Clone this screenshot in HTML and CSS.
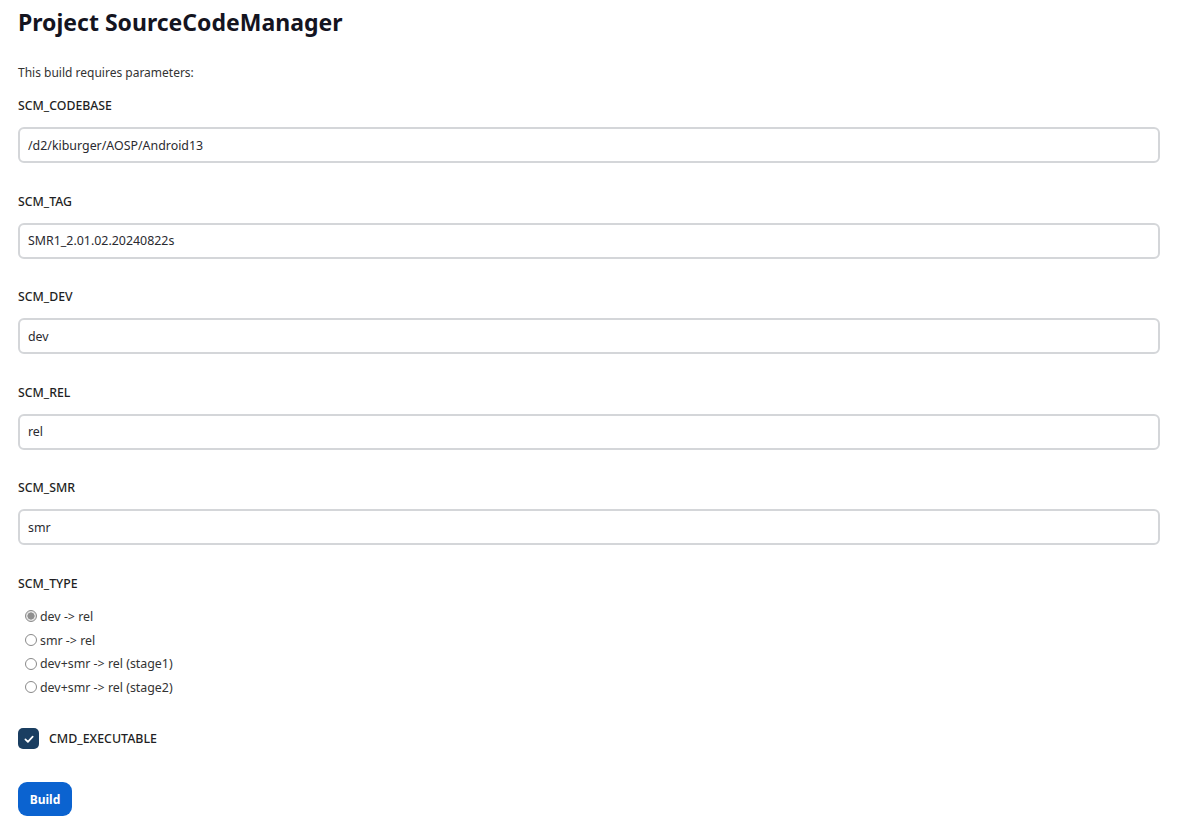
FILE: index.html
```html
<!DOCTYPE html>
<html lang="en">
<head>
<meta charset="utf-8">
<title>Project SourceCodeManager</title>
<link rel="stylesheet" href="styles.css">
</head>
<body>
<main class="page">
  <h1 class="title">Project SourceCodeManager</h1>
  <p class="intro">This build requires parameters:</p>
  <form class="params">
    <div class="field">
      <label class="field-label">SCM_CODEBASE</label>
      <input class="text-input" type="text" value="/d2/kiburger/AOSP/Android13">
    </div>
    <div class="field">
      <label class="field-label">SCM_TAG</label>
      <input class="text-input" type="text" value="SMR1_2.01.02.20240822s">
    </div>
    <div class="field">
      <label class="field-label">SCM_DEV</label>
      <input class="text-input" type="text" value="dev">
    </div>
    <div class="field">
      <label class="field-label">SCM_REL</label>
      <input class="text-input" type="text" value="rel">
    </div>
    <div class="field">
      <label class="field-label">SCM_SMR</label>
      <input class="text-input" type="text" value="smr">
    </div>
    <div class="field field-radio">
      <label class="field-label">SCM_TYPE</label>
      <div class="radios">
        <label class="radio-row"><input class="radio" type="radio" name="t" checked><span>dev -&gt; rel</span></label>
        <label class="radio-row"><input class="radio" type="radio" name="t"><span>smr -&gt; rel</span></label>
        <label class="radio-row"><input class="radio" type="radio" name="t"><span>dev+smr -&gt; rel (stage1)</span></label>
        <label class="radio-row"><input class="radio" type="radio" name="t"><span>dev+smr -&gt; rel (stage2)</span></label>
      </div>
    </div>
    <label class="check-row">
      <span class="checkbox">
        <svg viewBox="0 0 20 20" width="20" height="20"><path d="M6.4 10.4l2.5 2.5 4.8-5.2" fill="none" stroke="#fff" stroke-width="1.7" stroke-linecap="round" stroke-linejoin="round"/></svg>
      </span>
      <span class="check-label">CMD_EXECUTABLE</span>
    </label>
    <button class="build-btn" type="button">Build</button>
  </form>
</main>
</body>
</html>
```

FILE: styles.css
```css
* { box-sizing: border-box; }
html, body { margin: 0; padding: 0; background: #fff; }
body {
  font-family: "Noto Sans", "Open Sans", "Liberation Sans", sans-serif;
  color: #1f1f24;
}
.page {
  padding: 7px 26px 0 18px;
}
.title {
  margin: 0;
  font-size: 23px;
  font-weight: 700;
  line-height: 30px;
  color: #14141f;
}
.intro {
  margin: 28px 0 0;
  font-size: 12px;
  line-height: 16px;
  color: #333;
}
.params {
  display: flex;
  flex-direction: column;
}
.field {
  display: flex;
  flex-direction: column;
  margin-top: 16px;
}
.field + .field { margin-top: 29.5px; }
.field-label {
  font-size: 12.3px;
  font-weight: 500;
  line-height: 18px;
  color: #1f1f24;
}
.text-input {
  margin-top: 12px;
  height: 36px;
  width: 100%;
  border: 2px solid #d4d6d9;
  border-radius: 6px;
  padding: 0 8px;
  font-family: inherit;
  font-size: 12.4px;
  color: #2a2a30;
  background: #fff;
  outline: none;
}
.radios {
  display: flex;
  flex-direction: column;
  margin-top: 12px;
  padding-left: 7px;
}
.radio-row {
  display: flex;
  align-items: center;
  height: 23.7px;
  font-size: 12.4px;
  color: #333;
}
.radio {
  appearance: none;
  -webkit-appearance: none;
  width: 12px;
  height: 12px;
  margin: 0 3px 0 0;
  border: 1px solid #8a8a8a;
  border-radius: 50%;
  background: #fff;
}
.radio:checked {
  border-color: #8a8a8a;
  background: radial-gradient(circle, #8f8f8f 0 3.3px, #e2e2e2 3.8px);
}
.check-row {
  display: flex;
  align-items: center;
  gap: 10px;
  margin-top: 29px;
}
.checkbox {
  width: 21px;
  height: 21px;
  border-radius: 5px;
  background: #1a3e61;
  display: flex;
  align-items: center;
  justify-content: center;
}
.checkbox svg { display: block; }
.check-label {
  font-size: 12.4px;
  font-weight: 500;
  color: #1f1f24;
}
.build-btn {
  align-self: flex-start;
  margin-top: 33px;
  width: 54px;
  height: 34px;
  border: none;
  border-radius: 9px;
  background: #0b63d0;
  color: #fff;
  font-family: inherit;
  font-size: 12px;
  font-weight: 700;
  padding: 0;
}
```
